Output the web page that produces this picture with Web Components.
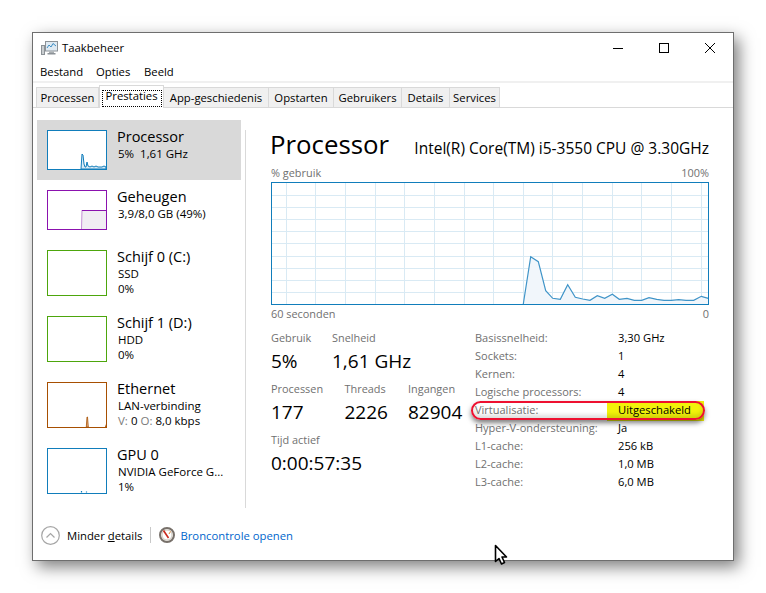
<!DOCTYPE html>
<html lang="nl"><head><meta charset="utf-8"><title>Taakbeheer</title>
<style>
html,body{margin:0;padding:0;background:#fff;}
body{width:766px;height:593px;overflow:hidden;font-family:"Open Sans","Noto Sans",sans-serif;font-size:11.2px;color:#000;}
</style></head><body>
<tm-window>
  <tm-titlebar>Taakbeheer</tm-titlebar>
  <tm-menu><span>Bestand</span><span>Opties</span><span>Beeld</span></tm-menu>
  <tm-tabs>
    <tm-tab w="63">Processen</tm-tab><tm-tab w="65" selected>Prestaties</tm-tab><tm-tab w="105">App-geschiedenis</tm-tab><tm-tab w="65">Opstarten</tm-tab><tm-tab w="68">Gebruikers</tm-tab><tm-tab w="48">Details</tm-tab><tm-tab w="50">Services</tm-tab>
  </tm-tabs>
  <tm-content>
    <tm-sidebar slot="side">
      <tm-item name="Processor" selected color="#117dbb" h="40">
        <svg slot="thumb" viewBox="0 0 60 40" width="60" height="40"><path d="M34 39L35 24 36 25 37 34 38 37 39 37 40 32 41 36 43 37 45 36 47 37 49 36 51 37 53 37 55 37 57 36 59 37V39Z" fill="#d9eaf5" stroke="#117dbb" stroke-width="1"/></svg>
        <div>5%&nbsp; 1,61 GHz</div>
      </tm-item>
      <tm-item name="Geheugen" color="#8b12ae" h="40">
        <svg slot="thumb" viewBox="0 0 60 40" width="60" height="40"><path d="M34.5 39L35 20H59V39Z" fill="#f1edf3"/><path d="M34.5 39L35 20" stroke="#c58fd6" stroke-width="1" fill="none"/><path d="M35 20.5H59" stroke="#8b12ae" stroke-width="1" fill="none"/></svg>
        <div>3,9/8,0 GB (49%)</div>
      </tm-item>
      <tm-item name="Schijf 0 (C:)" color="#4da60c" h="46"><div>SSD</div><div>0%</div></tm-item>
      <tm-item name="Schijf 1 (D:)" color="#4da60c" h="46"><div>HDD</div><div>0%</div></tm-item>
      <tm-item name="Ethernet" color="#a74f01" h="46">
        <svg slot="thumb" viewBox="0 0 60 46" width="60" height="46"><path d="M39.3 45L40 35 40.5 35 41.3 45Z" fill="#e3b48a" stroke="#a74f01" stroke-width=".8"/><path d="M58 45L59 42V45Z" fill="#a74f01"/></svg>
        <div>LAN-verbinding</div><div><tm-dim>V:</tm-dim> 0 <tm-dim>O:</tm-dim> 8,0 kbps</div>
      </tm-item>
      <tm-item name="GPU 0" color="#117dbb" h="46">
        <svg slot="thumb" viewBox="0 0 60 46" width="60" height="46"><path d="M34.5 44.5V43M39.5 44.5V43.6" stroke="#117dbb" stroke-width="1.2"/></svg>
        <div>NVIDIA GeForce G...</div><div>1%</div>
      </tm-item>
    </tm-sidebar>
    <tm-perf slot="main">
      <tm-heading sub="Intel(R) Core(TM) i5-3550 CPU @ 3.30GHz">Processor</tm-heading>
      <tm-caption left="% gebruik" right="100%" style="height:16px;line-height:14px"></tm-caption>
      <tm-graph></tm-graph>
      <tm-caption left="60 seconden" right="0" style="height:18px;line-height:18px"></tm-caption>
      <tm-details>
        <tm-stats>
          <tm-row cols="61px 1fr"><tm-stat label="Gebruik">5%</tm-stat><tm-stat label="Snelheid">1,61 GHz</tm-stat></tm-row>
          <tm-row cols="73.5px 63.5px 1fr"><tm-stat label="Processen">177</tm-stat><tm-stat label="Threads">2226</tm-stat><tm-stat label="Ingangen">82904</tm-stat></tm-row>
          <tm-row cols="1fr"><tm-stat label="Tijd actief">0:00:57:35</tm-stat></tm-row>
        </tm-stats>
        <tm-props>
          <tm-prop label="Basissnelheid:">3,30 GHz</tm-prop>
          <tm-prop label="Sockets:">1</tm-prop>
          <tm-prop label="Kernen:">4</tm-prop>
          <tm-prop label="Logische processors:">4</tm-prop>
          <tm-prop label="Virtualisatie:" marked>Uitgeschakeld</tm-prop>
          <tm-prop label="Hyper-V-ondersteuning:">Ja</tm-prop>
          <tm-prop label="L1-cache:">256 kB</tm-prop>
          <tm-prop label="L2-cache:">1,0 MB</tm-prop>
          <tm-prop label="L3-cache:">6,0 MB</tm-prop>
        </tm-props>
      </tm-details>
    </tm-perf>
  </tm-content>
  <tm-footer></tm-footer>
</tm-window>
<tm-cursor></tm-cursor>
<script>
function def(name, css, html, extra){
  customElements.define(name, class extends HTMLElement{
    constructor(){super();const r=this.attachShadow({mode:'open'});
      r.innerHTML='<style>'+css+'</style>'+(typeof html==='function'?html(this):html);}
    connectedCallback(){ if(extra) extra(this); }
  });
}
def('tm-window',`:host{display:flex;flex-direction:column;box-sizing:border-box;width:702px;height:529px;margin:32px 0 0 32px;background:#fff;border:1px solid #6e6e6e;box-shadow:5px 6px 15px rgba(0,0,0,.5);position:relative}`,'<slot></slot>');
def('tm-titlebar',`:host{display:flex;align-items:center;height:30px;flex:none;font-size:11.3px}
.ic{margin-left:8px;margin-right:4px;flex:none}
.t{flex:1;padding-bottom:2px}
.c{display:flex;flex:none;align-items:center;padding-bottom:1px}
.c svg{display:block}
.c span{display:flex;width:46px;height:28px;align-items:center;justify-content:center}`,
`<svg class="ic" width="17" height="16" viewBox="0 0 17 16"><rect x="4.5" y="1.5" width="12" height="9.5" fill="#dfeaf3" stroke="#8c9297"/><path d="M6 8L8 5 10 7 12 3.5 15 6" fill="none" stroke="#3d8ec4"/><rect x="8" y="11.5" width="5" height="1.5" fill="#a8adb1"/><rect x="6.5" y="13" width="8" height="1.5" fill="#8c9297"/><rect x=".5" y="5.5" width="3" height="9" fill="#c9cdd0" stroke="#8c9297"/></svg>
<div class="t"><slot></slot></div>
<div class="c"><span><svg width="10" height="10" viewBox="0 0 10 10"><path d="M0 5.5h10" stroke="#000"/></svg></span><span><svg width="10" height="10" viewBox="0 0 10 10"><rect x=".5" y=".5" width="9" height="9" fill="none" stroke="#000"/></svg></span><span><svg width="10" height="10" viewBox="0 0 10 10"><path d="M0 0L10 10M10 0L0 10" stroke="#000"/></svg></span></div>`);
def('tm-menu',`:host{display:flex;height:17px;padding-bottom:1px;flex:none;padding-left:7px;box-sizing:content-box;border-bottom:2px solid #f0f0f0;align-items:center;font-size:11.3px}
::slotted(span:nth-child(1)){width:56px}
::slotted(span:nth-child(2)){width:48px}`,'<slot></slot>');
def('tm-tabs',`:host{display:flex;align-items:flex-end;height:25px;flex:none;padding-left:3px;box-sizing:border-box;border-bottom:1px solid #d9d9d9}`,'<slot></slot>');
def('tm-tab',`:host{display:flex;box-sizing:border-box;height:20px;align-items:center;justify-content:center;background:#f0f0f0;border:1px solid #d9d9d9;border-bottom:0;border-left-width:0;font-size:11.3px;white-space:nowrap;position:relative}
:host(:first-child){border-left-width:1px}
:host([selected]){height:23px;background:#fff;margin-bottom:-1px;border-left-width:1px;padding-bottom:4px}
.f{display:none;position:absolute;left:2px;right:1px;top:4px;bottom:1px;border:1px dotted #000}
:host([selected]) .f{display:block}`,`<slot></slot><div class="f"></div>`,el=>{el.style.width=el.getAttribute('w')+'px'});
def('tm-content',`:host{display:flex;flex:1;min-height:0}
.s{width:212px;flex:none;box-sizing:border-box}
.d{width:1px;flex:none;background:#d9d9d9;margin:22px 0 4px}
.m{flex:1;min-width:0}`,`<div class="s"><slot name="side"></slot></div><div class="d"></div><div class="m"><slot name="main"></slot></div>`);
def('tm-sidebar',`:host{display:block;padding:12px 4px 0 4px}`,'<slot></slot>');
def('tm-item',`:host{display:flex;padding:10px 0 10px 10px;background:transparent}
:host([selected]){background:#d9d9d9}
.th{flex:none;width:60px;box-sizing:border-box;border:1px solid var(--c);background:#fff;overflow:hidden;position:relative;margin-right:10px}
.th ::slotted(svg){display:block;position:absolute;left:-1px;top:-1px}
.n{font-size:14.5px;line-height:16px;margin-top:-1px;height:17px;white-space:nowrap}
.b{font-size:11.5px;line-height:15px;white-space:nowrap;padding-left:1px}`,
el=>`<div class="th" style="--c:${el.getAttribute('color')};height:${el.getAttribute('h')}px"><slot name="thumb"></slot></div><div><div class="n">${el.getAttribute('name')}</div><div class="b"><slot></slot></div></div>`);
def('tm-dim',`:host{color:#7a7a7a}`,'<slot></slot>');
def('tm-perf',`:host{display:block;padding:0 24px 0 25px}`,'<slot></slot>');
def('tm-heading',`:host{display:flex;align-items:baseline;justify-content:space-between;height:58px;padding-top:9px;box-sizing:border-box;margin-left:-1px}
.h{font-size:25.8px;line-height:54px}
.s{font-size:15.5px}`,el=>`<div class="h"><slot></slot></div><div class="s">${el.getAttribute('sub')}</div>`);
def('tm-caption',`:host{display:flex;justify-content:space-between;font-size:10.9px;color:#707070}`,
el=>`<span>${el.getAttribute('left')}</span><span>${el.getAttribute('right')}</span>`);
const gridV=[286,315,345,375,404,434,464,493,523,552,582,612,641,671,701].map(x=>`M${x+.5} 183V304`).join('');
const gridH=[195,207,219,231,243,256,268,280,292].map(y=>`M272 ${y+.5}H708`).join('');
const pts="523.3,304 530.7,256.7 538.3,261.7 545.7,290.7 552.7,298.3 560.3,299.3 567.7,284.7 575.3,297.3 582.7,299 590,300.3 597.3,295.7 604.7,298.3 612.3,294.3 619.3,299.3 627,298.3 634.3,300.3 641.7,300.3 649,297.7 656.7,299.3 664,300.3 671.3,300.3 678.7,299.7 686,300.3 693.7,300.3 701.3,296.3 708.3,298.3";
def('tm-graph',`:host{display:block;height:123px;margin-top:0}svg{display:block}`,
`<svg width="438" height="123" viewBox="271 182 438 123"><path d="${gridV}${gridH}" stroke="#d9eaf4" fill="none"/><polygon points="${pts} 708.3,304" fill="#f1f6fb"/><polyline points="${pts}" fill="none" stroke="#3f94c8" stroke-width="1.2"/><rect x="271.5" y="182.5" width="437" height="122" fill="none" stroke="#117dbb"/></svg>`);
def('tm-details',`:host{display:grid;grid-template-columns:204px 1fr;margin-top:6px}`,'<slot></slot>');
def('tm-stats',`:host{display:block}`,'<slot></slot>');
def('tm-row',`:host{display:grid;margin-bottom:5px}`,'<slot></slot>',el=>{el.style.gridTemplateColumns=el.getAttribute('cols')});
def('tm-stat',`:host{display:block;white-space:nowrap}
.l{height:18px;line-height:18px;font-size:10.9px;color:#707070}
.v{height:28px;line-height:28px;font-size:19px}`,el=>`<div class="l">${el.getAttribute('label')}</div><div class="v"><slot></slot></div>`);
def('tm-props',`:host{display:block}`,'<slot></slot>');
def('tm-prop',`:host{display:grid;grid-template-columns:143px 1fr;height:18px;line-height:18px;font-size:11px;white-space:nowrap;position:relative}
.l{color:#707070;position:relative;z-index:1}
.v{position:relative;z-index:1;font-size:11.2px}
.y{display:none;position:absolute;left:132px;top:0;width:97px;height:20px;background:#f2f20a}
.r{display:none;position:absolute;left:-4px;top:0;width:234px;height:19px;box-sizing:border-box;border:2px solid #ee1030;border-radius:10px;box-shadow:0 3px 5px rgba(0,0,0,.5),inset 0 -3px 4px rgba(0,0,0,.14);z-index:2}
:host([marked]) .y,:host([marked]) .r{display:block}`,el=>`<div class="y"></div><div class="l">${el.getAttribute('label')}</div><div class="v"><slot></slot></div><div class="r"></div>`);
def('tm-footer',`:host{display:flex;align-items:center;height:48px;box-sizing:border-box;padding-bottom:2px;flex:none;padding-left:8px;font-size:11.3px}
svg{display:block;flex:none}
.m{margin-left:7px;white-space:nowrap}
u{text-underline-offset:1px}
.sep{width:1px;height:16px;background:#c8c8c8;margin:0 8px 0 8px;flex:none}
.a{color:#0066cc;margin-left:5px;white-space:nowrap}`,
`<svg width="19" height="19" viewBox="0 0 19 19"><circle cx="9.5" cy="9.5" r="8.8" fill="#fff" stroke="#a6a6a6" stroke-width="1.2"/><path d="M5.5 11.5L9.5 7.5 13.5 11.5" fill="none" stroke="#a6a6a6" stroke-width="1.2"/></svg>
<span class="m">Minder <u>d</u>etails</span><span class="sep"></span>
<svg width="16" height="16" viewBox="0 0 16 16"><circle cx="8" cy="8" r="7" fill="#f3f0ea" stroke="#77706a" stroke-width="2"/><circle cx="8" cy="8" r="5" fill="#fff" stroke="#cfcac2"/><path d="M4.5 3.5L9.5 11" stroke="#c9281c" stroke-width="1.6"/><path d="M11.5 4.5L10 7" stroke="#e08a3a"/></svg>
<span class="a">Broncontrole openen</span>`);
def('tm-cursor',`:host{position:absolute;left:494px;top:544px;width:15px;height:22px;display:block}svg{display:block}`,
`<svg width="15" height="22" viewBox="0 0 15 22"><path d="M1.5 1.5V17.5L5 14.5 7.5 20 10.5 18.5 8 13H12.5Z" fill="#fff" stroke="#000" stroke-width="1.6" stroke-linejoin="round"/></svg>`);
</script>
</body></html>
